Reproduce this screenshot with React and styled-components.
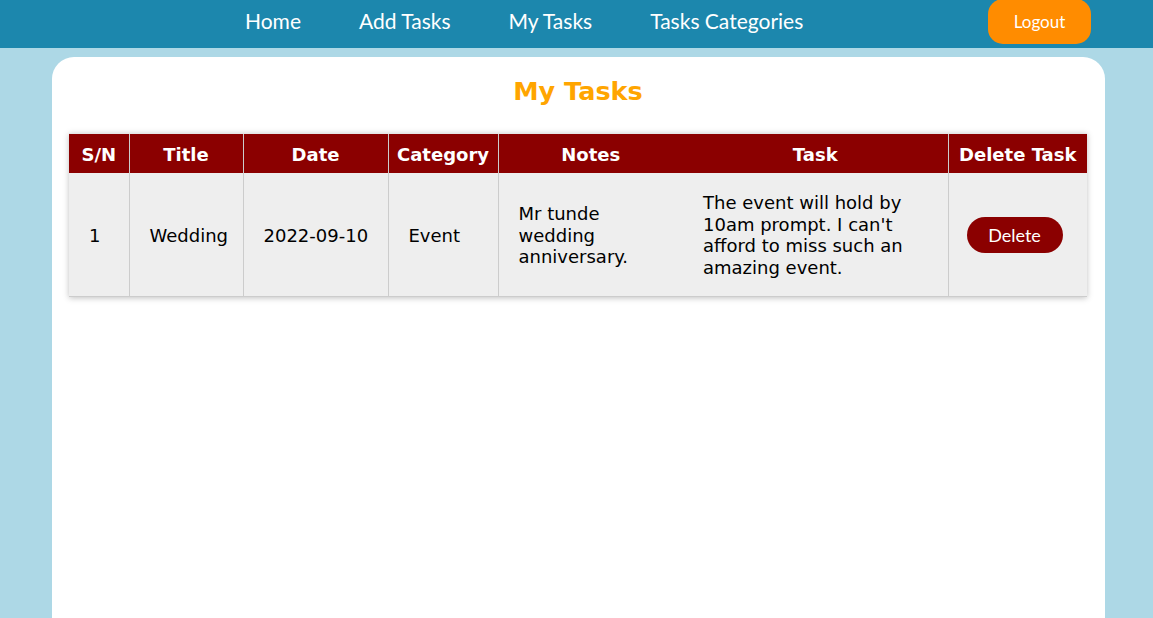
import React from "react";
import styled, { createGlobalStyle } from "styled-components";

const Global = createGlobalStyle`
  html, body { margin: 0; padding: 0; }
  body {
    background: #add8e6;
    font-family: "DejaVu Sans", Verdana, sans-serif;
    overflow: hidden;
  }
`;

const NavBar = styled.nav`
  height: 48px;
  background: #1c87ad;
  display: flex;
  align-items: flex-start;
  padding: 0 62px 0 245px;
  box-sizing: border-box;
`;

const NavLinks = styled.ul`
  list-style: none;
  margin: 0;
  padding: 0;
  display: flex;
  gap: 58px;
  height: 41px;
  align-items: center;
`;

const NavLink = styled.li`
  font-family: Lato, "Open Sans", sans-serif;
  font-size: 21px;
  color: #ffffff;
`;

const LogoutButton = styled.button`
  margin-left: auto;
  width: 103px;
  height: 45px;
  margin-top: -1px;
  border: none;
  border-radius: 15px;
  background: #ff8c00;
  color: #ffffff;
  font-family: Lato, "Open Sans", sans-serif;
  font-size: 17px;
  cursor: pointer;
`;

const Card = styled.main`
  background: #ffffff;
  margin: 9px 48px 0 52px;
  border-radius: 22px 22px 0 0;
  height: calc(100vh - 57px);
  padding: 18px 18px 0 17px;
  box-sizing: border-box;
`;

const Heading = styled.h1`
  margin: 0 0 26px;
  text-align: center;
  color: #ffa500;
  font-size: 25.5px;
  font-weight: bold;
  line-height: 32px;
`;

const Table = styled.table`
  width: 100%;
  table-layout: fixed;
  border-collapse: collapse;
  box-shadow: 0 1px 6px rgba(0, 0, 0, 0.25);
  font-size: 18px;
`;

const HeadCell = styled.th`
  box-sizing: border-box;
  background: #8b0000;
  color: #ffffff;
  font-weight: bold;
  text-align: center;
  padding: 10px 4px 7px;
  line-height: 22px;
  border-left: ${(p) => (p.$noLeft ? "none" : "1px solid #cccccc")};
  border-top: 1px solid #e6e6e6;
  width: ${(p) => p.$w}px;
  white-space: nowrap;
`;

const Cell = styled.td`
  box-sizing: border-box;
  background: #eeeeee;
  color: #000000;
  padding: 19px 10px 17px 20px;
  line-height: 21.7px;
  text-align: left;
  vertical-align: middle;
  border-left: ${(p) => (p.$noLeft ? "none" : "1px solid #cccccc")};
  border-bottom: 1px solid #cccccc;
`;

const DeleteButton = styled.button`
  width: 96px;
  height: 36px;
  border: none;
  border-radius: 18px;
  background: #8b0000;
  color: #ffffff;
  font-family: Lato, "Open Sans", sans-serif;
  font-size: 18px;
  cursor: pointer;
  display: block;
  margin-left: -2px;
`;

const columns = [
  { label: "S/N", w: 60 },
  { label: "Title", w: 114 },
  { label: "Date", w: 145 },
  { label: "Category", w: 110 },
  { label: "Notes", w: 185 },
  { label: "Task", w: 265, noLeft: true },
  { label: "Delete Task", w: 139 },
];

export default function App() {
  return (
    <>
      <Global />
      <NavBar>
        <NavLinks>
          <NavLink>Home</NavLink>
          <NavLink>Add Tasks</NavLink>
          <NavLink>My Tasks</NavLink>
          <NavLink>Tasks Categories</NavLink>
        </NavLinks>
        <LogoutButton>Logout</LogoutButton>
      </NavBar>
      <Card>
        <Heading>My Tasks</Heading>
        <Table>
          <thead>
            <tr>
              {columns.map((c, i) => (
                <HeadCell key={c.label} $w={c.w} $noLeft={i === 0 || c.noLeft}>
                  {c.label}
                </HeadCell>
              ))}
            </tr>
          </thead>
          <tbody>
            <tr>
              <Cell $noLeft>1</Cell>
              <Cell>Wedding</Cell>
              <Cell>2022-09-10</Cell>
              <Cell>Event</Cell>
              <Cell>Mr tunde wedding anniversary.</Cell>
              <Cell $noLeft>
                The event will hold by 10am prompt. I can't afford to miss such an amazing event.
              </Cell>
              <Cell>
                <DeleteButton>Delete</DeleteButton>
              </Cell>
            </tr>
          </tbody>
        </Table>
      </Card>
    </>
  );
}
